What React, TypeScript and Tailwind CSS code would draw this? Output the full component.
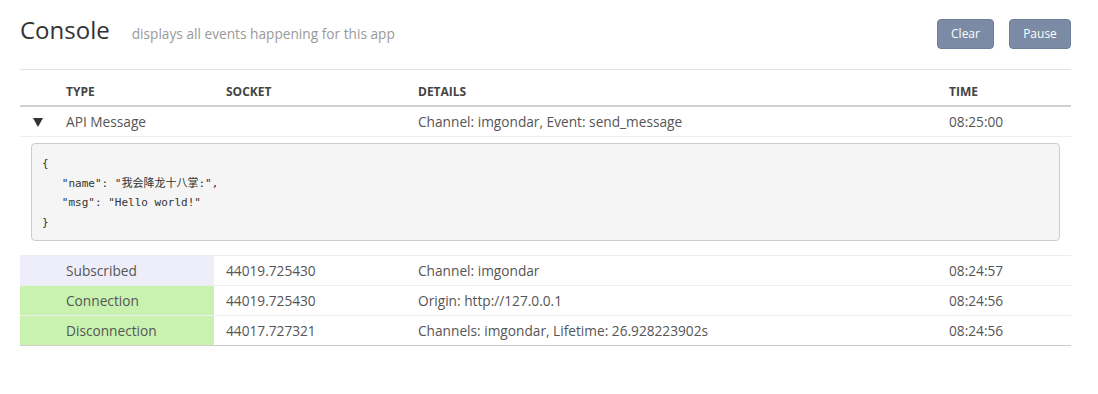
import React from 'react';

const cols = 'grid grid-cols-[34px_160px_192px_531px_134px]';

interface EventRow {
  type: string;
  socket: string;
  details: string;
  time: string;
  bg: string;
}

const rows: EventRow[] = [
  { type: 'Subscribed', socket: '44019.725430', details: 'Channel: imgondar', time: '08:24:57', bg: 'bg-[#eeeefb]' },
  { type: 'Connection', socket: '44019.725430', details: 'Origin: http://127.0.0.1', time: '08:24:56', bg: 'bg-[#c9f2b0]' },
  { type: 'Disconnection', socket: '44017.727321', details: 'Channels: imgondar, Lifetime: 26.928223902s', time: '08:24:56', bg: 'bg-[#c9f2b0]' },
];

const json = `{
   "name": "我会降龙十八掌:",
   "msg": "Hello world!"
}`;

export default function App() {
  return (
    <div className="w-[1098px] h-[394px] bg-white font-['Open_Sans',sans-serif] text-[#555]">
      {/* Header */}
      <div className="h-[69px] pl-5 pr-[27px] flex justify-between">
        <div className="pt-[14px] flex items-baseline">
          <h1 className="text-[24px] leading-[32px] text-[#333]">Console</h1>
          <span className="ml-[22px] text-[13.7px] text-[#999]">displays all events happening for this app</span>
        </div>
        <div className="pt-[19px] flex gap-[15px]">
          <button className="w-[57px] h-[30px] rounded-[4px] bg-[#7b8ba5] border border-[#6f7f99] text-white text-[12px]">
            Clear
          </button>
          <button className="w-[62px] h-[30px] rounded-[4px] bg-[#7b8ba5] border border-[#6f7f99] text-white text-[12px]">
            Pause
          </button>
        </div>
      </div>

      {/* Table */}
      <div className="ml-5 w-[1051px] border-t border-[#e3e3e3]">
        <div className={`${cols} h-[37px] border-b-2 border-[#cfcfcf] items-end pb-[4px] text-[12px] font-bold text-[#444] uppercase`}>
          <div />
          <div className="pl-3">Type</div>
          <div className="pl-3">Socket</div>
          <div className="pl-3">Details</div>
          <div className="pl-3">Time</div>
        </div>

        <div className={`${cols} h-[30px] pt-px border-b border-[#eeeeee] items-center text-[13.7px] leading-[20px]`}>
          <div className="pl-[13px]">
            <svg width="10" height="9" viewBox="0 0 10 9">
              <polygon points="0,0 10,0 5,9" fill="#333" />
            </svg>
          </div>
          <div className="pl-3">API Message</div>
          <div className="pl-3" />
          <div className="pl-3">Channel: imgondar, Event: send_message</div>
          <div className="pl-3">08:25:00</div>
        </div>

        <div className="h-[119px] border-b border-[#eeeeee] pt-[6px] px-[11px]">
          <pre className="h-[98px] px-[10px] py-[10px] bg-[#f5f5f5] border border-[#cccccc] rounded-[4px] text-[11px] leading-[19.5px] text-[#333] font-['DejaVu_Sans_Mono','Noto_Sans_CJK_SC',monospace]">
            {json}
          </pre>
        </div>

        {rows.map((r, i) => (
          <div
            key={i}
            className={`${cols} h-[30px] border-b items-stretch text-[13.7px] leading-[20px] ${
              i === rows.length - 1 ? 'border-[#cccccc]' : 'border-[#eeeeee]'
            }`}
          >
            <div className={r.bg} />
            <div className={`pl-3 pt-px flex items-center ${r.bg}`}>{r.type}</div>
            <div className="pl-3 pt-px flex items-center">{r.socket}</div>
            <div className="pl-3 pt-px flex items-center">{r.details}</div>
            <div className="pl-3 pt-px flex items-center">{r.time}</div>
          </div>
        ))}
      </div>
    </div>
  );
}
